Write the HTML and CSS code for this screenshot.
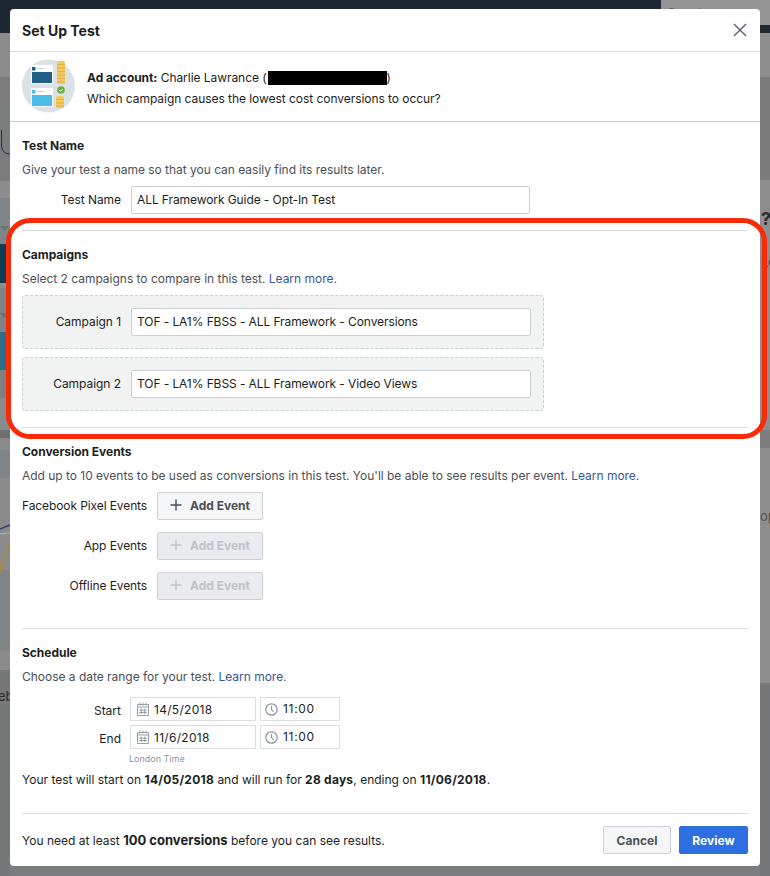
FILE: index.html
```html
<!DOCTYPE html>
<html lang="en">
<head>
<meta charset="utf-8">
<title>Set Up Test</title>
<link rel="stylesheet" href="styles.css">
</head>
<body>
<div class="backdrop">
  <div class="bg-topbar"></div>
  <div class="bg-search"><span>Search</span></div>
  <div class="bg-left"></div>
  <div class="bg-right"></div>
  <svg class="bg-tri bg-tri1" width="10" height="5" viewBox="0 0 10 5"><path d="M0 0h9L4.500 5z" fill="#6d7173"/></svg>
  <svg class="bg-tri bg-tri2" width="10" height="5" viewBox="0 0 10 5"><path d="M0 0h9L4.500 5z" fill="#6d7173"/></svg>
  <svg class="bg-u" width="10" height="30" viewBox="0 0 10 30"><path d="M1.500 1v15q0 9 8.500 9" stroke="#2a2f3a" stroke-width="1" fill="none"/></svg>
  <svg class="bg-chart" width="10" height="60" viewBox="0 0 10 60"><path d="M10 30L0 60V50Q6 44 10 22z" fill="#a18a44"/><path d="M0 14l10-4" stroke="#2b3f77" stroke-width="1.500"/><path d="M0 19l10-1" stroke="#a3a7aa" stroke-width="1.500"/></svg>
  <span class="bg-txt bg-q">?</span>
  <span class="bg-txt bg-le">Le</span>
  <span class="bg-txt bg-op">op</span>
  <span class="bg-txt bg-eb">eb</span>
</div>

<main class="dialog">
  <header class="dlg-head">
    <h1>Set Up Test</h1>
    <svg class="close" width="14" height="14" viewBox="0 0 14 14"><path d="M1 1l12 12M13 1L1 13" stroke="#606770" stroke-width="1.500" fill="none"/></svg>
  </header>
  <section class="account">
    <svg class="art" width="54" height="54" viewBox="0 0 54 54">
      <circle cx="26.500" cy="27" r="26.500" fill="#dbe2e7"/>
      <rect x="9" y="6" width="22" height="19" fill="#fff"/>
      <rect x="10" y="13" width="20" height="11" fill="#1f5f86"/>
      <rect x="10" y="8" width="3.500" height="3.500" fill="#1f5f86"/>
      <rect x="15" y="9" width="7" height="1" fill="#c3ccd2"/>
      <rect x="9" y="29" width="22" height="19" fill="#fff"/>
      <rect x="10" y="36" width="20" height="11" fill="#4bbce8"/>
      <rect x="10" y="31" width="3.500" height="3.500" fill="#4bbce8"/>
      <rect x="15" y="32" width="7" height="1" fill="#c3ccd2"/>
      <rect x="35" y="2" width="8" height="23" rx="1.500" fill="#f3c85e"/>
      <path d="M35 5.500h8M35 9h8M35 12.500h8M35 16h8M35 19.500h8M35 23h8" stroke="#dca83a" stroke-width=".8"/>
      <rect x="34" y="37" width="8" height="12" rx="1.500" fill="#f3c85e"/>
      <path d="M34 40.500h8M34 44h8M34 47h8" stroke="#dca83a" stroke-width=".8"/>
      <circle cx="39" cy="31" r="3.800" fill="#6fae45"/>
      <path d="M37.300 31l1.300 1.300 2.100-2.300" stroke="#fff" stroke-width=".9" fill="none"/>
    </svg>
    <div class="acct-text">
      <p><b>Ad account:</b> Charlie Lawrance (<span class="redact"></span>)</p>
      <p>Which campaign causes the lowest cost conversions to occur?</p>
    </div>
  </section>
  <div class="body">
    <section class="sec sec-name">
      <h2>Test Name</h2>
      <p class="help">Give your test a name so that you can easily find its results later.</p>
      <div class="row">
        <label class="lbl">Test Name</label>
        <div class="input wide">ALL Framework Guide - Opt-In Test</div>
      </div>
    </section>
    <section class="sec sec-camp">
      <h2>Campaigns</h2>
      <p class="help">Select 2 campaigns to compare in this test. <a>Learn more.</a></p>
      <div class="camp">
        <label class="lbl">Campaign 1</label>
        <div class="input camp-in">TOF - LA1% FBSS - ALL Framework - Conversions</div>
      </div>
      <div class="camp">
        <label class="lbl">Campaign 2</label>
        <div class="input camp-in">TOF - LA1% FBSS - ALL Framework - Video Views</div>
      </div>
    </section>
    <section class="sec sec-conv">
      <h2>Conversion Events</h2>
      <p class="help">Add up to 10 events to be used as conversions in this test. You'll be able to see results per event. <a>Learn more.</a></p>
      <div class="events">
        <span class="ev-lbl">Facebook Pixel Events</span>
        <button class="add"><svg width="12" height="12" viewBox="0 0 12 12"><path d="M6 .5v11M.5 6h11" stroke="currentColor" stroke-width="1.400"/></svg>Add Event</button>
        <span class="ev-lbl">App Events</span>
        <button class="add off"><svg width="12" height="12" viewBox="0 0 12 12"><path d="M6 .5v11M.5 6h11" stroke="currentColor" stroke-width="1.400"/></svg>Add Event</button>
        <span class="ev-lbl">Offline Events</span>
        <button class="add off"><svg width="12" height="12" viewBox="0 0 12 12"><path d="M6 .5v11M.5 6h11" stroke="currentColor" stroke-width="1.400"/></svg>Add Event</button>
      </div>
    </section>
    <section class="sec sec-sched">
      <h2>Schedule</h2>
      <p class="help">Choose a date range for your test. <a>Learn more.</a></p>
      <div class="dates">
        <span class="dlbl">Start</span>
        <div class="dfield date">
          <svg width="12" height="14" viewBox="0 0 12 14"><path d="M.5 2.500h11v11H.5zM.5 5h11M3 .5v3M6 .5v3M9 .5v3M4.200 6.500v5.500M7.800 6.500v5.500M2.200 8.200h7.600M2.200 10.500h7.600" stroke="#8d949e" fill="none" stroke-width=".9"/></svg>14/5/2018
        </div>
        <div class="dfield time">
          <svg width="13" height="13" viewBox="0 0 13 13"><circle cx="6.500" cy="6.500" r="5.700" stroke="#8d949e" stroke-width="1.200" fill="none"/><path d="M6.500 3v3.600l2.200 2.400" stroke="#8d949e" stroke-width="1.100" fill="none"/></svg><span class="tval">11:00</span>
        </div>
        <span class="dlbl">End</span>
        <div class="dfield date">
          <svg width="12" height="14" viewBox="0 0 12 14"><path d="M.5 2.500h11v11H.5zM.5 5h11M3 .5v3M6 .5v3M9 .5v3M4.200 6.500v5.500M7.800 6.500v5.500M2.200 8.200h7.600M2.200 10.500h7.600" stroke="#8d949e" fill="none" stroke-width=".9"/></svg>11/6/2018
        </div>
        <div class="dfield time">
          <svg width="13" height="13" viewBox="0 0 13 13"><circle cx="6.500" cy="6.500" r="5.700" stroke="#8d949e" stroke-width="1.200" fill="none"/><path d="M6.500 3v3.600l2.200 2.400" stroke="#8d949e" stroke-width="1.100" fill="none"/></svg><span class="tval">11:00</span>
        </div>
        <span class="tz">London Time</span>
      </div>
      <p class="summary">Your test will start on <b>14/05/2018</b> and will run for <b>28 days</b>, ending on <b>11/06/2018</b>.</p>
    </section>
    <footer class="foot">
      <p>You need at least <b>100 conversions</b> before you can see results.</p>
      <div class="btns">
        <button class="btn cancel">Cancel</button>
        <button class="btn review">Review</button>
      </div>
    </footer>
  </div>
</main>
<div class="callout"></div>
</body>
</html>
```
FILE: styles.css
```css
* { box-sizing: border-box; }
html, body { margin: 0; height: 876px; overflow: hidden; }
body {
  position: relative;
  width: 770px;
  background: #7b7c7d;
  font-family: Inter, "Liberation Sans", sans-serif;
  font-size: 12px;
  color: #1c1e21;
  padding-top: 9px;
}
.backdrop { position: absolute; inset: 0; overflow: hidden; }
.bg-topbar { position: absolute; left: 0; top: 0; width: 100%; height: 33px; background: #1e2733; }
.bg-search { position: absolute; left: 661px; top: 0; width: 109px; height: 25px; background: #959595; overflow: hidden; }
.bg-search span { position: absolute; left: 7px; top: 5px; color: #555; font-size: 11px; }
.bg-left {
  position: absolute; left: 0; top: 33px; width: 10px; height: 843px;
  background: linear-gradient(to bottom,
    #8c8c8c 0 44px, #7b7c7d 44px 148px, #8d8d8d 148px 165px, #7e8487 165px 211px,
    #123d50 211px 250px, #8d8d8d 250px 255px, #7f8385 255px 299px, #2a6d87 299px 337px,
    #808080 337px 365px, #8a8a8a 365px 397px, #6f7072 397px 405px, #8a8a8a 405px 417px,
    #7f8486 417px 445px, #8a8a8a 445px 537px, #808587 537px 617px, #8b8b8b 617px 637px, #777879 637px);
}
.bg-right {
  position: absolute; right: 0; top: 33px; width: 10px; height: 843px;
  background: linear-gradient(to bottom,
    #8e8e8e 0 44px, #7b7b7b 44px 147px, #8e8e8e 147px 397px, #7d7d7d 397px 415px, #8e8e8e 415px 650px, #77787a 650px);
}
.bg-tri { position: absolute; left: 0; }
.bg-tri1 { top: 226px; }
.bg-tri2 { top: 313px; }
.bg-u { position: absolute; left: 0; top: 129px; }
.bg-chart { position: absolute; left: 0; top: 515px; }
.bg-txt { position: absolute; color: #2b2b2b; font-size: 13px; }
.bg-q { left: 761px; top: 208px; font-size: 18px; font-weight: 700; }
.bg-le { left: 761px; top: 254px; color: #2c3d55; }
.bg-op { left: 760px; top: 508px; color: #555; }
.bg-eb { left: -2px; top: 688px; }

.dialog {
  position: relative;
  width: 750px;
  height: 857px;
  margin-left: 10px;
  background: #fff;
  border-radius: 4px;
  display: flex;
  flex-direction: column;
}
.dlg-head {
  height: 43px;
  flex: none;
  display: flex;
  align-items: center;
  justify-content: space-between;
  padding: 0 13px 0 12px;
  border-bottom: 1px solid #dadde1;
}
h1 { margin: 0; font-size: 14px; font-weight: 700; }
.account {
  height: 70px;
  flex: none;
  display: flex;
  align-items: center;
  padding: 0 12px;
  gap: 11px;
  border-bottom: 1px solid #c9ccd0;
}
.art { flex: none; margin-top: -1px; }
.acct-text { padding-top: 3px; }
.acct-text p { margin: 0; line-height: 20px; font-size: 12px; letter-spacing: -.05px; }
.acct-text p + p { margin-top: 1px; }
.redact { display: inline-block; width: 119px; height: 14px; background: #000; vertical-align: -3px; margin-left: 1px; }
.body { padding: 0 12px; flex: 1; display: flex; flex-direction: column; }
.sec { border-bottom: 1px solid #dadde1; }
h2 { margin: 0; font-size: 12px; font-weight: 700; line-height: 16px; letter-spacing: -.03px; }
.help { margin: 8px 0 0; color: #4b4f56; line-height: 16px; letter-spacing: -.02px; }
.help a { color: #365899; }
.sec-name { height: 109px; padding-top: 16px; }
.row { display: flex; align-items: center; margin-top: 8px; gap: 10px; }
.lbl { width: 99px; text-align: right; flex: none; letter-spacing: -.05px; padding-bottom: 2px; }
.input {
  height: 28px;
  background: #fff;
  border: 1px solid #ccd0d5;
  border-radius: 2px;
  padding: 0 5px 2px;
  display: flex;
  align-items: center;
  letter-spacing: -.09px;
}
.wide { width: 399px; }
.sec-camp { height: 197px; padding-top: 16px; }
.camp {
  width: 522px;
  height: 54px;
  margin-top: 8px;
  display: flex;
  align-items: center;
  gap: 10px;
  background: #f1f2f2;
  border: 1px dashed #ccd0d5;
  border-radius: 3px;
}
.camp .lbl { width: 98px; }
.camp-in { width: 400px; }
.sec-conv { height: 201px; padding-top: 16px; }
.events {
  display: grid;
  grid-template-columns: 125px 106px;
  grid-auto-rows: 28px;
  row-gap: 12px;
  column-gap: 10px;
  margin-top: 8px;
  align-items: center;
}
.ev-lbl { text-align: right; white-space: nowrap; letter-spacing: -.1px; padding-bottom: 2px; }
.add {
  height: 28px;
  width: 106px;
  display: flex;
  align-items: center;
  justify-content: center;
  gap: 8px;
  padding: 0 0 2px;
  font: 700 12px Inter, "Liberation Sans", sans-serif;
  color: #4b4f56;
  background: #f5f6f7;
  border: 1px solid #ccd0d5;
  border-radius: 2px;
}
.add.off { color: #bec3c9; background: #e9ebee; }
.sec-sched { height: 185px; padding-top: 16px; }
.dates {
  display: grid;
  grid-template-columns: 104px 126px 80px;
  grid-auto-rows: 24px;
  column-gap: 4px;
  row-gap: 4px;
  margin-top: 12px;
  align-items: center;
}
.dlbl { text-align: right; padding-right: 5px; padding-top: 2px; }
.dfield {
  height: 24px;
  border: 1px solid #dadde1;
  display: flex;
  align-items: center;
  padding-left: 6px;
  gap: 5px;
  white-space: nowrap;
  letter-spacing: .3px;
}
.time { padding-left: 4px; gap: 5px; font-size: 12px; }
.tval { margin-top: -2px; letter-spacing: .7px; }
.tz { grid-column: 2; color: #90949c; font-size: 9px; margin-left: -1px; height: 12px; align-self: start; white-space: nowrap; }
.summary { margin: -5px 0 0; line-height: 16px; }
.summary b { letter-spacing: .25px; }
.foot {
  flex: 1;
  display: flex;
  align-items: center;
  justify-content: space-between;
}
.foot p { margin: 0; }
.foot b { font-size: 13px; }
.btns { display: flex; gap: 8px; }
.btn {
  height: 28px;
  font: 700 12px Inter, "Liberation Sans", sans-serif;
  border-radius: 2px;
  padding: 0;
  border: 1px solid;
}
.cancel { width: 68px; color: #4b4f56; background: #f5f6f7; border-color: #ccd0d5; }
.review { width: 69px; color: #fff; background: #2d6fe0; border-color: #2d6fe0; }
.callout {
  position: absolute;
  left: 6px;
  top: 218px;
  width: 761px;
  height: 221px;
  border: 5.5px solid #fb2a06;
  border-radius: 24px;
}
```
